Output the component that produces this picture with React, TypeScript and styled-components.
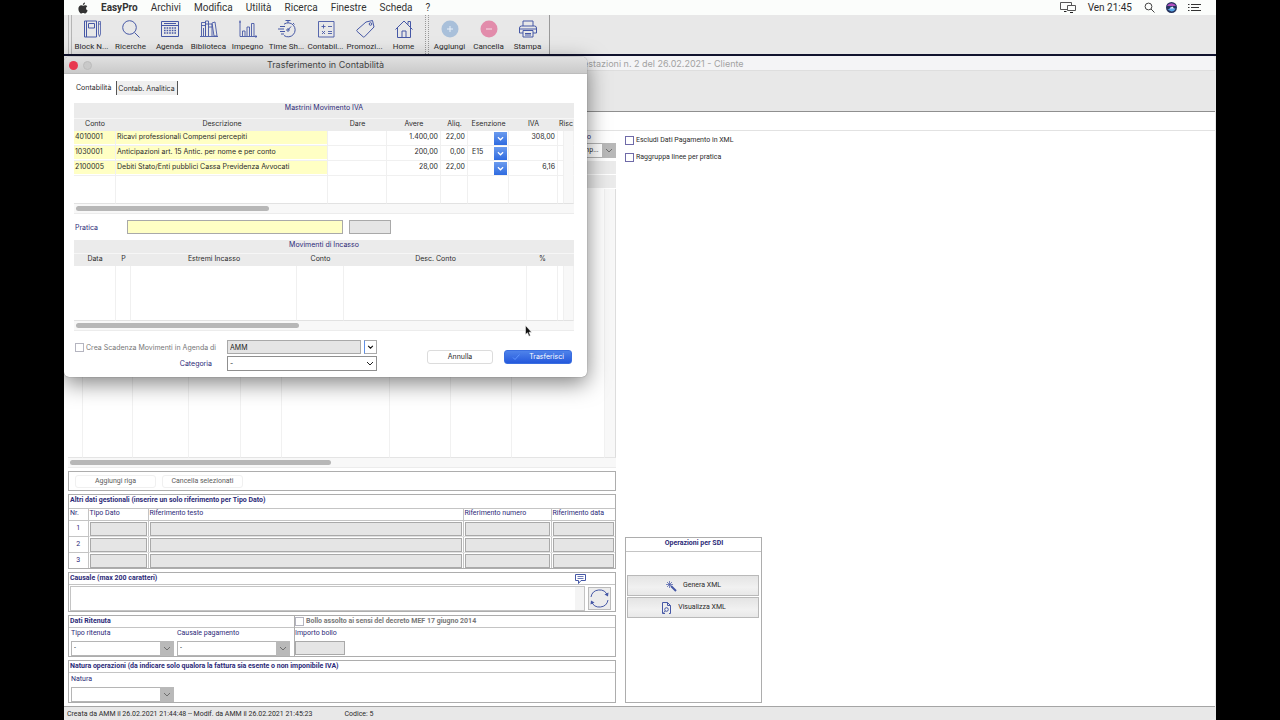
import React from 'react';
import styled, { createGlobalStyle, css } from 'styled-components';

const navy = '#2c2a78';
const line = '#adadad';
const stroke = '#4658a6';

const GlobalStyle = createGlobalStyle`
  * { box-sizing: border-box; }
  body { margin: 0; background: #000; font-family: Roboto, "Liberation Sans", sans-serif; }
  button, input, select, textarea, table { font-family: inherit; }
  body, button, input, select, textarea, table {
    font-size: 7px;
    line-height: 9px;
    color: #2b2b2b;
  }
`;

const Desktop = styled.div`
  position: relative;
  display: flex;
  flex-direction: column;
  min-height: 100vh;
  margin: 0 5%;
  background: #e8e8e8;
`;

/* ---------- menu bar ---------- */
const MenuBar = styled.nav`
  display: flex;
  align-items: center;
  height: 15px;
  padding: 0 15px 0 14px;
  background: #fbfdfb;
  font-size: 10px;
  line-height: 14px;
`;
const MenuLink = styled.a<{ $strong?: boolean }>`
  margin-right: 13px;
  color: #333;
  text-decoration: none;
  font-weight: ${p => (p.$strong ? 700 : 400)};
`;
const MenuStatus = styled.div`
  display: flex;
  align-items: center;
  gap: 12px;
  margin-left: auto;
`;
const StatusIcons = styled.div`
  display: flex;
  align-items: center;
  gap: 11px;
`;
const AppleLogo = styled.svg`
  width: 10px;
  height: 12px;
  margin-right: 13px;
`;

/* ---------- application toolbar ---------- */
const Toolbar = styled.div`
  display: flex;
  height: 41px;
  padding-left: 4px;
  border-bottom: 2px solid #11132e;
`;
const Grip = styled.div<{ $dotted?: boolean }>`
  width: 4px;
  border: ${p => (p.$dotted ? '1px dotted #999' : '1px solid #b5b5b5')};
  border-width: 0 1px;
  margin-right: ${p => (p.$dotted ? '1px' : '0')};
`;
const ToolGroup = styled.div<{ $last?: boolean }>`
  display: flex;
  padding-right: 2px;
  border-right: ${p => (p.$last ? '1px solid #999' : 'none')};
`;
const Tool = styled.button`
  display: flex;
  flex-direction: column;
  align-items: center;
  gap: 3px;
  width: 39px;
  padding: 4px 0 0;
  border: 0;
  background: none;
  font-size: 8px;
  white-space: nowrap;
`;
const ToolIcon = styled.svg`
  width: 20px;
  height: 20px;
  fill: none;
  stroke: ${stroke};
  stroke-width: 1;
`;

/* ---------- document window ---------- */
const Window = styled.main`
  display: flex;
  flex: 1;
  flex-direction: column;
  margin-right: 1px;
  border-radius: 4px;
  overflow: hidden;
  background: #fff;
`;
const WindowTitle = styled.h1`
  margin: 0;
  height: 15px;
  padding-left: 8px;
  background: #f4f4f6;
  border-bottom: 1px solid #dedede;
  color: #a2a2a2;
  font-family: Inter, "Liberation Sans", sans-serif;
  font-size: 9px;
  font-weight: 400;
  line-height: 16px;
  text-align: center;
`;
const WindowTools = styled.div`
  height: 41px;
  background: #e8e8e8;
  border-bottom: 1px solid #8f8f8f;
`;
const Tabs = styled.div`
  height: 19px;
  border-bottom: 1px solid #e2e2e2;
`;
const Columns = styled.div`
  display: flex;
  flex: 1;
  gap: 9px;
  padding: 0 4px 3px;
`;
const LeftColumn = styled.div`
  display: flex;
  flex-direction: column;
  width: 548px;
  gap: 3px;
`;
const RightColumn = styled.div`
  display: flex;
  flex: 1;
  flex-direction: column;
  align-items: flex-start;
  gap: 8px;
  padding-top: 5px;
`;
const PaymentField = styled.label`
  display: flex;
  flex-direction: column;
  align-self: flex-end;
  width: 80px;
  padding-top: 2px;
  gap: 1px;
  color: ${navy};
  & > span:first-child { padding-right: 25px; text-align: right; }
`;

const LinesFrame = styled.div`
  display: flex;
  flex: 1;
  flex-direction: column;
`;
const LinesTable = styled.table`
  width: 100%;
  flex: 1;
  display: flex;
  flex-direction: column;
  border-spacing: 0;
  & thead, & tbody { display: flex; flex-direction: column; }
  & tbody { flex: 1; }
  & tr { display: grid; grid-template-columns: 15px 50px 56px 52px 41px 108px 61px 61px 1fr 11px; flex: 1; }
  & th { height: 13px; padding: 0; background: #ebebeb; margin-bottom: 1px; }
  & td { padding: 0; border-right: 1px solid #f1f1f1; border-bottom: 1px solid #e4e4e4; }
  & td:last-child { background: #f8f8f8; border-right-color: #ddd; }
`;

const Scroll = styled.div`
  height: 10px;
  padding: 2px;
  background: #f8f8f8;
  border-bottom: 1px solid #ececec;
`;
const Thumb = styled.div<{ $size: number }>`
  width: ${p => p.$size}%;
  height: 5px;
  border-radius: 3px;
  background: #b7b7b7;
`;

const ButtonBar = styled.div`
  display: flex;
  gap: 6px;
  height: 20px;
  padding: 3px 6px;
  border: 1px solid ${line};
`;
const FlatButton = styled.button`
  width: 81px;
  height: 13px;
  padding: 0;
  border: 1px solid #f0f0f0;
  border-radius: 3px;
  background: #fff;
  color: #5c5c5c;
`;

const Section = styled.section`
  border: 1px solid ${line};
`;
const SectionTitle = styled.h2<{ $tall?: boolean; $center?: boolean }>`
  display: flex;
  justify-content: ${p => (p.$center ? 'center' : 'space-between')};
  height: ${p => (p.$tall ? 14 : 12)}px;
  margin: 0;
  padding: 0 ${p => (p.$center ? '0' : '29px')} 0 1px;
  border-bottom: 1px solid #c4c4c4;
  color: ${navy};
  font-size: 7px;
  font-weight: 700;
  line-height: 11px;
`;

const RefTable = styled.table`
  width: 100%;
  table-layout: fixed;
  border-collapse: collapse;
  color: ${navy};
  & th { height: 12px; padding: 0 0 0 1px; font-weight: 400; color: ${navy}; text-align: left; border-bottom: 1px solid #c4c4c4; vertical-align: top; }
  & th + th, & td { border-left: 1px solid #c4c4c4; }
  & tbody th { padding: 0; text-align: center; vertical-align: middle; }
  & td { height: 15px; padding: 1px 1px 0; border-bottom: 1px solid #e0e0e0; }
  & tbody tr:last-child > * { border-bottom: 0; }
`;

const Field = styled.input<{ $tone?: 'yellow' | 'grey' }>`
  display: block;
  width: 100%;
  height: 14px;
  padding: 0 2px;
  border: 1px solid #a9a9a9;
  border-radius: 0;
  background: ${p => (p.$tone === 'yellow' ? '#ffffc4' : '#e5e5e5')};
  color: #222;
`;

const CausaleRow = styled.div`
  display: flex;
  gap: 3px;
  height: 26px;
  padding: 1px 4px 0 1px;
`;
const CausaleText = styled.textarea`
  flex: 1;
  height: 25px;
  border: 1px solid #b5b5b5;
  border-right: 10px solid #f4f4f4;
  outline: 1px solid #c4c4c4;
  outline-offset: -1px;
  resize: none;
`;
const RefreshButton = styled.button`
  width: 23px;
  height: 23px;
  margin-top: 1px;
  padding: 0;
  border: 1px solid #bbb;
  background: #ececec;
`;

const Ritenuta = styled.div`
  display: grid;
  grid-template-columns: 225px 1fr;
  height: 40px;
`;
const RitenutaPart = styled.div`
  & + & { border-left: 1px solid ${line}; }
`;
const BollRow = styled.div`
  height: 12px;
  padding-top: 1px;
  border-bottom: 1px solid #c4c4c4;
`;
const FieldRow = styled.div<{ $top?: number; $flush?: boolean }>`
  display: flex;
  gap: 3px;
  padding: ${p => p.$top ?? 1}px 2px 0 ${p => (p.$flush ? 0 : 2)}px;
`;
const Labelled = styled.label<{ $w: number }>`
  display: flex;
  flex-direction: column;
  gap: 3px;
  width: ${p => p.$w}px;
  color: ${navy};
`;

const SelectBox = styled.span<{ $muted?: boolean }>`
  display: grid;
  grid-template-columns: 1fr 14px;
  grid-template-rows: 15px;
  height: 15px;
  & > select {
    grid-area: 1 / 1 / 2 / 3;
    width: 100%;
    height: 100%;
    appearance: none;
    padding: 0 16px 0 2px;
    border: 1px solid ${p => (p.$muted ? '#b5b5b5' : '#8f8f8f')};
    border-radius: 0;
    background: #fff;
  }
  & > svg {
    grid-area: 1 / 2 / 2 / 3;
    width: 14px;
    height: 15px;
    pointer-events: none;
    z-index: 1;
    fill: none;
    stroke: ${p => (p.$muted ? '#6f6f6f' : '#222')};
    background: ${p => (p.$muted ? '#b9b9b9' : 'none')};
  }
`;

const Check = styled.label<{ $tone?: 'navy' | 'grey'; $bold?: boolean }>`
  display: flex;
  align-items: center;
  gap: 2px;
  white-space: nowrap;
  color: ${p => (p.$tone === 'grey' ? '#777' : '#2b2b2b')};
  font-weight: ${p => (p.$bold ? 700 : 400)};
  & > input {
    appearance: none;
    flex: none;
    width: 9px;
    height: 9px;
    margin: 0;
    border: 1px solid ${p => (p.$tone === 'navy' ? '#6f6aa8' : '#b5b5c0')};
    background: #fff;
  }
`;

const SdiPanel = styled.section`
  display: flex;
  flex-direction: column;
  width: 137px;
  height: 166px;
  margin-top: auto;
  border: 1px solid ${line};
`;
const SdiButtons = styled.div`
  display: flex;
  flex-direction: column;
  gap: 1px;
  padding: 23px 2px 0 1px;
`;
const SdiButton = styled.button<{ $gap: number }>`
  display: flex;
  align-items: center;
  justify-content: center;
  gap: ${p => p.$gap}px;
  height: 21px;
  padding: 0;
  border: 1px solid #b9b9b9;
  background: linear-gradient(#e4e4e4, #f1f1f1 60%, #e8e8e8);
`;
const SmallIcon = styled.svg`
  width: 12px;
  height: 12px;
  fill: none;
  stroke: ${stroke};
`;

const StatusBar = styled.footer`
  display: flex;
  gap: 32px;
  height: 14px;
  padding: 3px 3px 1px;
  border-top: 1px solid #a5a5a5;
  background: #e8e8e8;
`;

/* ---------- transfer dialog ---------- */
const Dialog = styled.div`
  position: absolute;
  z-index: 5;
  top: 57px;
  left: 0;
  width: 523px;
  border-radius: 5px;
  background: #fff;
  font-family: Inter, "Liberation Sans", sans-serif;
  box-shadow: 0 6px 22px rgba(0, 0, 0, 0.5), 0 0 1px rgba(0, 0, 0, 0.6);
`;
const DialogTitle = styled.header`
  display: grid;
  grid-template-columns: 40px 1fr 40px;
  align-items: center;
  height: 17px;
  border-bottom: 1px solid #bdbdbd;
  border-radius: 5px 5px 0 0;
  background: linear-gradient(#e0e0e0, #cacaca);
  & h2 { margin: 0; font-size: 9px; font-weight: 400; line-height: 12px; text-align: center; color: #444; }
`;
const Lights = styled.div`
  display: flex;
  gap: 5px;
  padding-left: 5px;
`;
const Light = styled.button<{ $on?: boolean }>`
  width: 9px;
  height: 9px;
  padding: 0;
  border: ${p => (p.$on ? '0' : '1px solid #bcbcbc')};
  border-radius: 50%;
  background: ${p => (p.$on ? '#e8384f' : '#c9c9c9')};
`;
const DialogBody = styled.div`
  padding: 7px 13px 6px 10px;
`;
const DialogTabs = styled.div`
  display: flex;
  height: 22px;
`;
const DialogTab = styled.button<{ $active?: boolean }>`
  height: ${p => (p.$active ? 13 : 14)}px;
  padding: ${p => (p.$active ? '0 5px 0 2px' : '1px 2px 0 1px')};
  border: ${p => (p.$active ? '0' : '1px solid #555')};
  border-width: 0 1px;
  background: ${p => (p.$active ? 'none' : '#efefef')};
  white-space: nowrap;
`;

const Grid = styled.table<{ $caption: number; $head: number }>`
  width: 100%;
  table-layout: fixed;
  border-spacing: 0;
  & caption { height: ${p => p.$caption}px; background: #ebebeb; color: ${navy}; border-bottom: 1px solid #f6f6f6; }
  & th { height: ${p => p.$head}px; padding: 0; background: #ebebeb; font-weight: 400; vertical-align: top; white-space: nowrap; overflow: hidden; }
  & td { height: 15px; padding: 0 2px 4px 1px; border-right: 1px solid #f0f0f0; border-bottom: 1px solid #f0f0f0; white-space: nowrap; }
  & td:last-child { background: #f8f8f8; border-bottom-color: #f8f8f8; }
  & tbody tr:last-child > td { border-bottom-color: #e2e2e2; }
`;
const cellTone = css`background: linear-gradient(#ffffc4 13px, #fff 13px);`;
const Cell = styled.td<{ $yellow?: boolean; $right?: boolean }>`
  ${p => p.$yellow && cellTone}
  text-align: ${p => (p.$right ? 'right' : 'left')};
`;
const Exemption = styled.div`
  display: flex;
  align-items: flex-start;
  justify-content: space-between;
  height: 13px;
  margin: 0 -1px -4px 3px;
`;
const BlueDrop = styled.button`
  width: 13px;
  height: 13px;
  padding: 0;
  border: 0;
  background: linear-gradient(#6b9bee, #2f6be0);
  & svg { display: block; width: 13px; height: 13px; fill: none; stroke: #fff; stroke-width: 1.4; }
`;
const FillRow = styled.tr<{ $h: number }>`
  & > td { height: ${p => p.$h}px; }
`;

const Pratica = styled.div`
  display: grid;
  grid-template-columns: 46px 216px 42px;
  align-items: center;
  column-gap: 6px;
  padding: 6px 0 6px 1px;
  & label { color: ${navy}; }
`;
const DialogFooter = styled.div`
  display: flex;
  align-items: center;
  padding-top: 9px;
`;
const FooterForm = styled.div`
  display: grid;
  grid-template-columns: 140px 150px;
  row-gap: 2px;
  column-gap: 12px;
  align-items: center;
  padding-left: 1px;
`;
const AgendaField = styled.div`
  display: flex;
  gap: 3px;
`;
const DropButton = styled.button`
  flex: none;
  width: 13px;
  height: 14px;
  padding: 0;
  border: 1px solid #aaa;
  border-left-color: #5f8fe6;
  background: #fff;
  & svg { display: block; width: 11px; height: 12px; fill: none; stroke: #111; stroke-width: 1.4; }
`;
const CategoryLabel = styled.label`
  padding-right: 3px;
  text-align: right;
  color: ${navy};
`;
const Actions = styled.div`
  display: flex;
  gap: 11px;
  margin: 2px 2px 0 auto;
`;
const ActionButton = styled.button<{ $primary?: boolean }>`
  display: flex;
  align-items: center;
  justify-content: center;
  gap: 9px;
  width: ${p => (p.$primary ? 68 : 66)}px;
  height: 14px;
  padding: 0;
  border: 1px solid ${p => (p.$primary ? '#3a6ee0' : '#dcdcdc')};
  border-radius: 3px;
  background: ${p => (p.$primary ? 'linear-gradient(#4f83ea, #2559dc)' : '#fff')};
  color: ${p => (p.$primary ? '#fff' : '#2b2b2b')};
  & svg { width: 8px; height: 8px; fill: none; stroke: #5f95ff; }
`;
const Pointer = styled.svg`
  position: absolute;
  z-index: 6;
  top: 325px;
  left: 461px;
  width: 7px;
  height: 12px;
`;

const Chevron = () => (
  <svg viewBox="0 0 14 15" aria-hidden="true"><path d="M4 6l3 3L10 6" /></svg>
);

type DropProps = { id?: string; value: string; muted?: boolean; label?: string };
const Drop = ({ id, value, muted, label }: DropProps) => (
  <SelectBox $muted={muted}>
    <select id={id} defaultValue={value} aria-label={label}><option>{value}</option></select>
    <Chevron />
  </SelectBox>
);

const tools: { name: string; art: React.ReactNode }[] = [
  { name: 'Block N...', art: <><path d="M2.500 2h12v16h-12zM4.500 2v16M6.500 4.500h6v4.500h-6z" /><path d="M16.500 2.500h2v12.500l-1 2.500-1-2.500zM16.500 5h2" strokeWidth=".8" /></> },
  { name: 'Ricerche', art: <><circle cx="8.500" cy="8.500" r="6.800" /><path d="M13.500 13.500l5 5" /></> },
  { name: 'Agenda', art: <><path d="M1.500 2.500h17v15h-17zM1.500 6.500h17M4 4.500h12" /><path d="M4 9h12M4 11.500h12M4 14h12" strokeWidth="1.600" strokeDasharray="1.600 1" /></> },
  { name: 'Biblioteca', art: <path d="M1 17.500h18M2.500 17V3.500h4V17M6.500 17V2h3v15M9.500 5h3.500v12M2.500 6.500h4M6.500 5h3M13 4l3-1 2 14h-3zM9.500 8H13M4.500 9v8" strokeWidth=".9" /> },
  { name: 'Impegno', art: <path d="M2 1.500v16h17M4.500 17v-5h2.500v5M9 17V8h2.500v9M13.500 17V4.500H16V17M1 3h2M17.500 16.500l1.500 1-1.500 1" strokeWidth=".9" /> },
  { name: 'Time Sh...', art: <><path d="M7 5.200A7 7 0 1 1 7 16.500M8.500 1.500h5M11 1.500V4M16 4l1.500 1.500M11 11l3-3.500M3 7.500h5M1 10h6M3 12.500h5M4 15h3" /><circle cx="11" cy="11" r="1.200" /></> },
  { name: 'Contabil...', art: <path d="M2.500 2.500h15.500v15.500H2.500zM5.500 7.500h4M7.500 5.500v4M12 7.500h4M6 12l3 3M9 12l-3 3M12 12.500h4M12 14.500h4" strokeWidth=".9" /> },
  { name: 'Promozi...', art: <><path d="M11 3l6.500-1.500L19 8l-9.500 9.800a1 1 0 0 1-1.400 0L2 12.300a1 1 0 0 1 0-1.400z" /><circle cx="15.500" cy="5" r="1.300" /></> },
  { name: 'Home', art: <path d="M1.500 10.500L10 2l8.500 8.500M3.500 9v9.500h13V9M14 5.500v-3h2.500v5.500M8 18.500v-6.500h4v6.500" /> },
];

const actions: { name: string; art: React.ReactNode }[] = [
  { name: 'Aggiungi', art: <><circle cx="10" cy="10" r="8.500" fill="#a9c0da" stroke="none" /><path d="M10 7v6M7 10h6" stroke="#e9f1fa" /></> },
  { name: 'Cancella', art: <><circle cx="10" cy="10" r="8.500" fill="#e28cab" stroke="none" /><path d="M7 10h6" stroke="#f8dce6" /></> },
  { name: 'Stampa', art: <><path d="M5 7V2h10v5M3.500 7h13a2 2 0 0 1 2 2v5H15M5 14H1.500V9a2 2 0 0 1 2-2M5 11.500h10v6.500H5zM1.500 10h17" /><path d="M7 14.500h6M7 16h6" /></> },
];

const movements = [
  ['4010001', 'Ricavi professionali Compensi percepiti', '1.400,00', '22,00', '', '308,00'],
  ['1030001', 'Anticipazioni art. 15 Antic. per nome e per conto', '200,00', '0,00', 'E15', ''],
  ['2100005', 'Debiti Stato/Enti pubblici Cassa Previdenza Avvocati', '28,00', '22,00', '', '6,16'],
];

const Cols = ({ widths }: { widths: number[] }) => (
  <colgroup>{widths.map((w, i) => <col key={i} width={w} />)}</colgroup>
);
const Blank = ({ count, h }: { count: number; h: number }) => (
  <FillRow $h={h}>{Array.from({ length: count }, (_, i) => <td key={i} />)}</FillRow>
);

const ToolButton = ({ name, art }: { name: string; art: React.ReactNode }) => (
  <Tool type="button"><ToolIcon viewBox="0 0 20 20" aria-hidden="true">{art}</ToolIcon>{name}</Tool>
);

const TransferDialog = () => (
  <Dialog role="dialog" aria-labelledby="dialog-title">
    <DialogTitle>
      <Lights><Light $on type="button" aria-label="Chiudi" /><Light type="button" aria-label="Riduci" /></Lights>
      <h2 id="dialog-title">Trasferimento in Contabilità</h2>
    </DialogTitle>
    <DialogBody>
      <DialogTabs>
        <DialogTab $active type="button">Contabilità</DialogTab>
        <DialogTab type="button">Contab. Analitica</DialogTab>
      </DialogTabs>
      <Grid $caption={16} $head={12}>
        <caption>Mastrini Movimento IVA</caption>
        <Cols widths={[42, 212, 59, 54, 27, 41, 49, 6, 10]} />
        <thead>
          <tr><th>Conto</th><th>Descrizione</th><th>Dare</th><th>Avere</th><th>Aliq.</th><th>Esenzione</th><th>IVA</th><th colSpan={2}>Risc</th></tr>
        </thead>
        <tbody>
          {movements.map(([conto, desc, avere, aliq, es, iva]) => (
            <tr key={conto}>
              <Cell $yellow>{conto}</Cell>
              <Cell $yellow>{desc}</Cell>
              <Cell />
              <Cell $right>{avere}</Cell>
              <Cell $right>{aliq}</Cell>
              <Cell>
                <Exemption>
                  <span>{es}</span>
                  <BlueDrop type="button" aria-label="Scegli esenzione"><Chevron /></BlueDrop>
                </Exemption>
              </Cell>
              <Cell $right>{iva}</Cell>
              <Cell /><Cell />
            </tr>
          ))}
          <Blank count={9} h={28} />
        </tbody>
      </Grid>
      <Scroll><Thumb $size={39} /></Scroll>
      <Pratica>
        <label htmlFor="pratica">Pratica</label>
        <Field id="pratica" $tone="yellow" />
        <Field aria-label="Codice pratica" disabled />
      </Pratica>
      <Grid $caption={14} $head={12}>
        <caption>Movimenti di Incasso</caption>
        <Cols widths={[42, 15, 166, 47, 183, 31, 6, 10]} />
        <thead>
          <tr><th>Data</th><th>P</th><th>Estremi Incasso</th><th>Conto</th><th>Desc. Conto</th><th>%</th><th colSpan={2} /></tr>
        </thead>
        <tbody><Blank count={8} h={55} /></tbody>
      </Grid>
      <Scroll><Thumb $size={45} /></Scroll>
      <DialogFooter>
        <FooterForm>
          <Check $tone="grey"><input type="checkbox" />Crea Scadenza Movimenti in Agenda di</Check>
          <AgendaField>
            <Field aria-label="Agenda" defaultValue="AMM" />
            <DropButton type="button" aria-label="Scegli agenda"><Chevron /></DropButton>
          </AgendaField>
          <CategoryLabel htmlFor="categoria">Categoria</CategoryLabel>
          <Drop id="categoria" value="-" />
        </FooterForm>
        <Actions>
          <ActionButton type="button">Annulla</ActionButton>
          <ActionButton type="button" $primary>
            <svg viewBox="0 0 8 8" aria-hidden="true"><path d="M1 4.500l2 2L7.500 1.500" /></svg>
            Trasferisci
          </ActionButton>
        </Actions>
      </DialogFooter>
    </DialogBody>
  </Dialog>
);

export default function App() {
  return (
    <Desktop>
      <GlobalStyle />
      <MenuBar>
        <AppleLogo viewBox="0 0 20 24" aria-hidden="true">
          <path fill="#333" d="M14 1c.2 2.500-1.800 4.800-4.200 4.800C9.500 3.500 11.500 1.200 14 1zM18.500 8.500c-3.500 2.200-3 7 .8 8.500-1 2.800-3 6-5 6-1.500 0-2-1-4-1s-2.600 1-4 1C3.800 23 .8 18 .8 13.500c0-4.500 2.800-7 5.700-7 1.600 0 2.800 1 3.900 1 1 0 2.500-1.200 4.500-1.100 1.400.1 2.700.700 3.600 2.100z" />
        </AppleLogo>
        <MenuLink href="#easypro" $strong>EasyPro</MenuLink>
        {['Archivi', 'Modifica', 'Utilità', 'Ricerca', 'Finestre', 'Scheda', '?'].map(m => (
          <MenuLink key={m} href="#menu">{m}</MenuLink>
        ))}
        <MenuStatus>
          <svg width="16" height="11" viewBox="0 0 16 11" fill="none" stroke="#555" aria-hidden="true">
            <path d="M7 7.500H.5v-7h11V3M7.500 3.500h8v5h-8z" /><path d="M4 9.500h2.500M10 10.500h3" stroke="#222" />
          </svg>
          <span>Ven 21:45</span>
          <StatusIcons>
            <svg width="11" height="11" viewBox="0 0 11 11" fill="none" stroke="#444" aria-hidden="true">
              <circle cx="4.500" cy="4.500" r="3.400" /><path d="M7 7l3.500 3.500" />
            </svg>
            <svg width="11" height="11" viewBox="0 0 11 11" aria-hidden="true">
              <circle cx="5.500" cy="5.500" r="5.500" fill="#26345f" /><path d="M1 4a5 5 0 0 1 9 0z" fill="#b04fc0" />
              <path d="M1.500 7.500Q4 7 5 4.500q1 2 4.500 2-1 3-4 3z" fill="#58a8e8" /><path d="M3.500 6.500l3-2 1.500 2z" fill="#eef" />
            </svg>
            <svg width="13" height="9" viewBox="0 0 13 9" stroke="#333" aria-hidden="true">
              <path d="M0 1.500h1.500M3 1.500h10M0 4.500h1.500M3 4.500h8M0 7.500h1.500M3 7.500h10" />
            </svg>
          </StatusIcons>
        </MenuStatus>
      </MenuBar>

      <Toolbar>
        <Grip />
        <ToolGroup>{tools.map(t => <ToolButton key={t.name} {...t} />)}</ToolGroup>
        <Grip $dotted />
        <ToolGroup $last>{actions.map(t => <ToolButton key={t.name} {...t} />)}</ToolGroup>
      </Toolbar>

      <Window>
        <WindowTitle>Avviso Prestazioni n. 2 del 26.02.2021 - Cliente</WindowTitle>
        <WindowTools />
        <Tabs />
        <Columns>
          <LeftColumn>
            <PaymentField>
              <span>Pagamento</span>
              <Drop muted value="Bonifico su comp..." />
            </PaymentField>
            <LinesFrame>
              <LinesTable>
                <thead>
                  <tr><th /><th /><th /><th /><th /><th /><th /><th /><th /><th /></tr>
                  <tr><th /><th /><th /><th /><th /><th /><th /><th /><th /><th /></tr>
                </thead>
                <tbody>
                  <tr><td /><td /><td /><td /><td /><td /><td /><td /><td /><td /></tr>
                </tbody>
              </LinesTable>
              <Scroll><Thumb $size={48} /></Scroll>
            </LinesFrame>
            <ButtonBar>
              <FlatButton type="button">Aggiungi riga</FlatButton>
              <FlatButton type="button">Cancella selezionati</FlatButton>
            </ButtonBar>
            <Section>
              <SectionTitle $tall>Altri dati gestionali (inserire un solo riferimento per Tipo Dato)</SectionTitle>
              <RefTable>
                <Cols widths={[19, 60, 315, 88, 64]} />
                <thead>
                  <tr><th>Nr.</th><th>Tipo Dato</th><th>Riferimento testo</th><th>Riferimento numero</th><th>Riferimento data</th></tr>
                </thead>
                <tbody>
                  {[1, 2, 3].map(n => (
                    <tr key={n}>
                      <th scope="row">{n}</th>
                      {['Tipo Dato', 'Riferimento testo', 'Riferimento numero', 'Riferimento data'].map(c => (
                        <td key={c}><Field aria-label={`${c} ${n}`} disabled /></td>
                      ))}
                    </tr>
                  ))}
                </tbody>
              </RefTable>
            </Section>
            <Section>
              <SectionTitle>
                Causale (max 200 caratteri)
                <svg width="11" height="11" viewBox="0 0 11 11" fill="none" stroke={stroke} aria-hidden="true">
                  <path d="M.5 1.500h10v6H6l-2.500 3v-3h-3z" /><path d="M2.500 3.500h6M2.500 5.500h6" strokeWidth=".8" />
                </svg>
              </SectionTitle>
              <CausaleRow>
                <CausaleText aria-label="Causale" />
                <RefreshButton type="button" aria-label="Aggiorna causale">
                  <svg width="21" height="21" viewBox="0 0 21 21" fill="none" stroke={stroke} aria-hidden="true">
                    <path d="M2 9a8.600 8.600 0 0 1 16.500-1.500M19 12a8.600 8.600 0 0 1-16.500 1.500" />
                    <path d="M19.500 4.500L19 8.500l-3.500-2zM1.500 16.500l.5-4 3.500 2z" fill={stroke} stroke="none" />
                  </svg>
                </RefreshButton>
              </CausaleRow>
            </Section>
            <Section>
              <Ritenuta>
                <RitenutaPart>
                  <SectionTitle>Dati Ritenuta</SectionTitle>
                  <FieldRow>
                    <Labelled $w={103}>Tipo ritenuta<Drop muted value="-" /></Labelled>
                    <Labelled $w={113}>Causale pagamento<Drop muted value="-" /></Labelled>
                  </FieldRow>
                </RitenutaPart>
                <RitenutaPart>
                  <BollRow>
                    <Check $tone="grey" $bold><input type="checkbox" />Bollo assolto ai sensi del decreto MEF 17 giugno 2014</Check>
                  </BollRow>
                  <FieldRow $flush>
                    <Labelled $w={50}>Importo bollo<Field disabled /></Labelled>
                  </FieldRow>
                </RitenutaPart>
              </Ritenuta>
            </Section>
            <Section>
              <SectionTitle>Natura operazioni (da indicare solo qualora la fattura sia esente o non imponibile IVA)</SectionTitle>
              <FieldRow $top={2}>
                <Labelled $w={103}>Natura<Drop muted value="" /></Labelled>
              </FieldRow>
            </Section>
          </LeftColumn>

          <RightColumn>
            <Check $tone="navy"><input type="checkbox" />Escludi Dati Pagamento in XML</Check>
            <Check $tone="navy"><input type="checkbox" />Raggruppa linee per pratica</Check>
            <SdiPanel>
              <SectionTitle $tall $center>Operazioni per SDI</SectionTitle>
              <SdiButtons>
                <SdiButton type="button" $gap={6}>
                  <SmallIcon viewBox="0 0 12 12" aria-hidden="true">
                    <path d="M6 6l5 5" strokeWidth="2" />
                    <path d="M4.500 1v7M1 4.500h7M2 2l5 5M7 2L2 7" strokeWidth=".7" />
                  </SmallIcon>
                  Genera XML
                </SdiButton>
                <SdiButton type="button" $gap={6}>
                  <SmallIcon viewBox="0 0 12 12" aria-hidden="true">
                    <path d="M5 11.500H2.500V.5h5L10.500 3.500v8H9M7.500.5v3h3" /><circle cx="6.500" cy="7.500" r="1.800" /><path d="M5.200 9L3.500 10.800" />
                  </SmallIcon>
                  Visualizza XML
                </SdiButton>
              </SdiButtons>
            </SdiPanel>
          </RightColumn>
        </Columns>
        <StatusBar>
          <span>Creata da AMM il 26.02.2021 21:44:48 -- Modif. da AMM il 26.02.2021 21:45:23</span>
          <span>Codice: 5</span>
        </StatusBar>
      </Window>

      <TransferDialog />
      <Pointer viewBox="0 0 7 12" aria-hidden="true">
        <path d="M.5.5v9l2-1.800 1.500 3.500 1.400-.6L4 7.200h2.600z" fill="#111" stroke="#fff" strokeWidth=".5" />
      </Pointer>
    </Desktop>
  );
}
